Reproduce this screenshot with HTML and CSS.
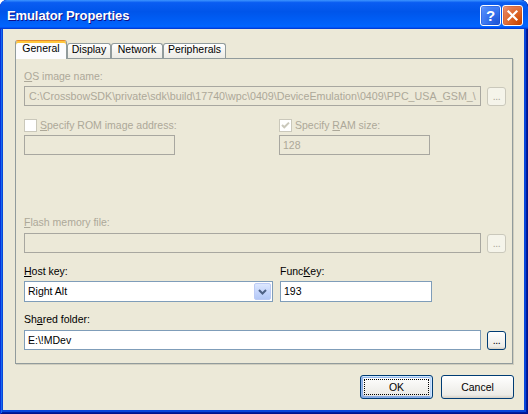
FILE: index.html
```html
<!DOCTYPE html>
<html>
<head>
<meta charset="utf-8">
<title>Emulator Properties</title>
<link rel="stylesheet" href="styles.css">
</head>
<body>
<div class="window">
  <div class="titlebar">
    <span class="title">Emulator Properties</span>
    <div class="controls">
      <div class="ctl help">?</div>
      <div class="ctl close">
        <svg width="19" height="19" viewBox="0 0 19 19"><path d="M5.5 5.5 L13.5 13.5 M13.5 5.5 L5.5 13.5" stroke="#fff" stroke-width="2.2" stroke-linecap="square"/></svg>
      </div>
    </div>
  </div>
  <div class="client">
    <div class="tabs">
      <div class="tab active t-general">General</div>
      <div class="tab t-display">Display</div>
      <div class="tab t-network">Network</div>
      <div class="tab t-periph">Peripherals</div>
    </div>
    <div class="panel">
      <div class="label disabled l-os"><u>O</u>S image name:</div>
      <div class="row r-os">
        <div class="textbox disabled wide">C:\CrossbowSDK\private\sdk\build\17740\wpc\0409\DeviceEmulation\0409\PPC_USA_GSM_\</div>
        <div class="browse disabled">...</div>
      </div>
      <div class="pair r-check">
        <div class="col">
          <div class="check disabled"><span class="box"></span><span><u>S</u>pecify ROM image address:</span></div>
        </div>
        <div class="col">
          <div class="check disabled"><span class="box"><svg width="11" height="11" viewBox="0 0 11 11"><path d="M2 5 L4.3 7.3 L9 2.6" fill="none" stroke="#cac8bb" stroke-width="2"/></svg></span><span>Specify <u>R</u>AM size:</span></div>
        </div>
      </div>
      <div class="pair r-sizes">
        <div class="col"><div class="textbox disabled half"></div></div>
        <div class="col"><div class="textbox disabled half">128</div></div>
      </div>
      <div class="label disabled l-flash"><u>F</u>lash memory file:</div>
      <div class="row r-flash">
        <div class="textbox disabled wide"></div>
        <div class="browse disabled">...</div>
      </div>
      <div class="pair2 l-host">
        <div class="label"><u>H</u>ost key:</div>
        <div class="label">Func<u>K</u>ey:</div>
      </div>
      <div class="pair2 r-host">
        <div class="combo">
          <span class="combo-text">Right Alt</span>
          <span class="combo-btn"><svg width="15" height="17" viewBox="0 0 15 17"><path d="M4 7 L7.5 10.5 L11 7" fill="none" stroke="#4d6185" stroke-width="2"/></svg></span>
        </div>
        <div class="textbox funckey">193</div>
      </div>
      <div class="label l-shared">Sh<u>a</u>red folder:</div>
      <div class="row r-shared">
        <div class="textbox wide">E:\!MDev</div>
        <div class="browse">...</div>
      </div>
    </div>
    <div class="actions">
      <div class="btn default"><span class="focus">OK</span></div>
      <div class="btn">Cancel</div>
    </div>
  </div>
</div>
</body>
</html>
```

FILE: styles.css
```css
* { box-sizing: border-box; }
html, body { margin: 0; padding: 0; }
body {
  width: 528px;
  height: 414px;
  overflow: hidden;
  background: #ffffff;
  font-family: "Liberation Sans", Arial, sans-serif;
  font-size: 10.5px;
  color: #000;
}
u { text-decoration: underline; text-underline-offset: 1px; }

.window {
  width: 528px;
  height: 414px;
  display: flex;
  flex-direction: column;
  background: #0846da;
  border-radius: 7px 7px 0 0;
  overflow: hidden;
  box-shadow: inset 1px 0 #0831d9, inset -1px 0 #00138c, inset 0 -1px #00138c, inset 2px 0 #166aee, inset -2px 0 #001ea0, inset 0 -2px #001ea0;
}

.titlebar {
  height: 29px;
  flex: none;
  display: flex;
  align-items: center;
  justify-content: space-between;
  padding: 0 5px 0 7px;
  background: linear-gradient(to bottom, #3d95ff 0%, #0a5df2 9%, #0055ea 40%, #0062fb 85%, #0066ff 90%, #005bff 94%, #003dd7 97%, #003dd7 100%);
  border-radius: 7px 7px 0 0;
}
.title {
  color: #fff;
  font-family: "Liberation Sans", Arial, sans-serif;
  font-weight: bold;
  font-size: 13px;
  letter-spacing: -0.1px;
  text-shadow: 1px 1px #0f1089;
  margin-top: 1px;
}
.controls { display: flex; gap: 1px; margin-top: 1px; }
.ctl {
  width: 21px;
  height: 21px;
  border: 1px solid #fff;
  border-radius: 3px;
  display: flex;
  align-items: center;
  justify-content: center;
}
.help {
  background: radial-gradient(circle at 85% 85%, #1f56d8 0%, #336fec 40%, #4f8afa 80%, #7fadff 100%);
  box-shadow: inset 0 0 0 1px rgba(0,40,170,0.25);
  color: #fff;
  font-family: "Liberation Sans", Arial, sans-serif;
  font-weight: bold;
  font-size: 15px;
  line-height: 19px;
}
.close {
  background: radial-gradient(circle at 90% 90%, #cc4600 0%, #dc6527 45%, #e5805a 80%, #f0a68a 100%);
  box-shadow: inset 0 0 0 1px rgba(150,40,0,0.2);
}

.client {
  flex: 1;
  margin: 0 4px 4px 3px;
  background: #ece9d8;
  display: flex;
  flex-direction: column;
  padding: 11px 11px 0 12px;
}

.tabs {
  height: 18px;
  display: flex;
  align-items: flex-end;
  position: relative;
  z-index: 1;
}
.tab {
  height: 15px;
  border: 1px solid #919b9c;
  border-bottom: none;
  border-radius: 3px 3px 0 0;
  background: linear-gradient(to bottom, #ffffff 0%, #f7f7f4 40%, #ecebe5 100%);
  text-align: center;
  line-height: 9px;
  padding-top: 1px;
}
.tab.active {
  height: 19px;
  margin-bottom: -1px;
  line-height: 13px;
  padding-top: 1px;
  background: #fcfcfe;
  border-color: #919b9c;
  border-top: 1px solid #e68b2c;
  box-shadow: inset 0 2px #ffc73c;
}
.t-general { width: 52px; }
.t-display { width: 44px; }
.t-network { width: 52px; }
.t-periph { width: 63px; }

.panel {
  width: 498px;
  height: 306px;
  flex: none;
  border: 1px solid #919b9c;
  background: #ece9d8;
  box-shadow: 1px 1px 0 #d0cebf;
  padding: 11px 0 0 8px;
  display: flex;
  flex-direction: column;
}
.label {
  height: 13px;
  line-height: 13px;
  white-space: nowrap;
}
.disabled { color: #aca899; }

.row { display: flex; align-items: center; }
.textbox {
  height: 20px;
  border: 1px solid #7f9db9;
  background: #fff;
  line-height: 18px;
  padding-left: 3px;
  white-space: nowrap;
  overflow: hidden;
}
.textbox.disabled {
  background: #ece9d8;
  border-color: #a8a7a0;
  color: #aca899;
}
.r-os .textbox { font-size: 10.7px; padding-left: 4px; }
.wide { width: 457px; }
.half { width: 151px; }

.browse {
  width: 19px;
  height: 19px;
  margin-left: 6px;
  border: 1px solid #003c74;
  border-radius: 3px;
  background: linear-gradient(180deg, #fff 0%, #ecebe6 86%, #d6d0c5 100%);
  text-align: center;
  line-height: 17px;
  font-size: 10.5px;
  letter-spacing: -0.5px;
}
.browse.disabled {
  border-color: #cac8bb;
  background: #f5f4ea;
  color: #aca899;
}

.r-os { margin-top: 3px; }

.pair { display: grid; grid-template-columns: 255px auto; }
.pair2 { display: grid; grid-template-columns: 256px auto; }
.r-check { margin-top: 13px; height: 13px; }
.check { display: flex; align-items: center; height: 13px; gap: 3px; white-space: nowrap; }
.box {
  width: 13px;
  height: 13px;
  border: 1px solid #cac8bb;
  background: #fff;
  display: flex;
  align-items: center;
  justify-content: center;
  flex: none;
}
.check span:last-child { line-height: 13px; }
.r-sizes { margin-top: 3px; }

.l-flash { margin-top: 61px; }
.r-flash { margin-top: 4px; }
.l-host { margin-top: 12px; height: 13px; }
.r-host { margin-top: 3px; }

.combo {
  width: 249px;
  height: 21px;
  border: 1px solid #7f9db9;
  background: #fff;
  display: flex;
  align-items: center;
  justify-content: space-between;
  padding: 1px;
}
.combo-text { padding-left: 2px; line-height: 17px; }
.combo-btn {
  width: 17px;
  height: 17px;
  border: 1px solid #bccbf5;
  border-radius: 2px;
  background: linear-gradient(180deg, #dde8fe 0%, #c6d6fc 50%, #b3c8f6 100%);
  display: flex;
  align-items: center;
  justify-content: center;
}
.funckey { width: 152px; height: 21px; line-height: 19px; }

.l-shared { margin-top: 11px; }
.r-shared { margin-top: 4px; }

.actions {
  display: flex;
  justify-content: flex-end;
  gap: 8px;
  margin-top: 11px;
  margin-right: -1px;
}
.btn {
  width: 73px;
  height: 24px;
  border: 1px solid #003c74;
  border-radius: 3px;
  background: linear-gradient(180deg, #fff 0%, #ecebe6 86%, #d6d0c5 100%);
  display: flex;
  align-items: center;
  justify-content: center;
  line-height: 13px;
}
.btn.default {
  box-shadow: inset -1px 1px #cee7ff, inset 1px 2px #98b8ea, inset -2px 2px #bcd4f6, inset 1px -1px #89ade4, inset 2px -2px #89ade4;
  position: relative;
}
.btn.default::after {
  content: "";
  position: absolute;
  left: 3px;
  top: 3px;
  right: 3px;
  bottom: 3px;
  border: 1px dotted #000;
}
```
